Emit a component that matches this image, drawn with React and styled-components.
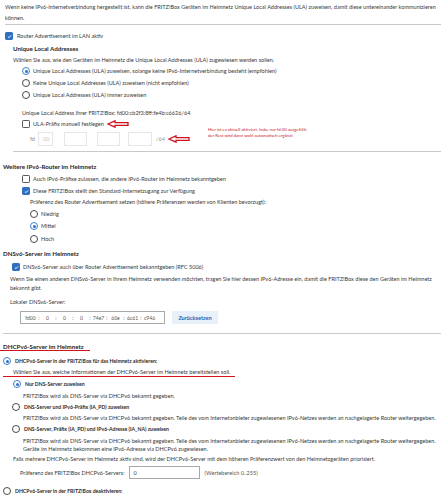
import React from "react";
import styled, { createGlobalStyle } from "styled-components";

const GlobalStyle = createGlobalStyle`
  html, body {
    margin: 0;
    padding: 0;
    background: #ffffff;
  }
  body {
    font-family: "Lato", "Open Sans", sans-serif;
    color: #3a3a3a;
    font-size: 5.55px;
    -webkit-font-smoothing: antialiased;
  }
`;

const Page = styled.div`
  width: 441px;
  height: 499px;
  overflow: hidden;
  display: flex;
  flex-direction: column;
`;

const Text = styled.div`
  padding-left: ${props => props.$indent || 0}px;
  margin-top: ${props => props.$mt || 0}px;
  line-height: ${props => props.$lh || 11}px;
  white-space: nowrap;
`;

const Heading = styled.div`
  padding-left: ${props => props.$indent || 3}px;
  margin-top: ${props => props.$mt || 0}px;
  line-height: 11px;
  font-size: 6.2px;
  font-weight: 700;
  color: #262626;
  white-space: nowrap;
`;

const Rule = styled.div`
  margin-left: ${props => props.$indent || 0}px;
  margin-top: ${props => props.$mt || 0}px;
  height: 1px;
  background: #c9c9c9;
`;

const Option = styled.label`
  display: flex;
  align-items: center;
  padding-left: ${props => props.$indent || 0}px;
  margin-top: ${props => props.$mt || 0}px;
  height: 11px;
  white-space: nowrap;
  font-size: ${props => (props.$bold ? "5.15px" : "inherit")};
  font-weight: ${props => (props.$bold ? 700 : 400)};
  color: ${props => (props.$bold ? "#2a2a2a" : "#3a3a3a")};
`;

const Box = styled.span`
  flex: none;
  width: 6px;
  height: 6px;
  margin-right: ${props => props.$gap || 3}px;
  border-radius: 1.2px;
  border: 0.8px solid ${props => (props.$checked ? "#2f6fc0" : "#5a5a5a")};
  background: ${props => (props.$checked ? "#2f6fc0" : "#ffffff")};
  display: flex;
  align-items: center;
  justify-content: center;
`;

const Round = styled.span`
  flex: none;
  width: 6px;
  height: 6px;
  margin-right: ${props => props.$gap || 3}px;
  border-radius: 50%;
  border: 0.8px solid ${props => (props.$checked ? "#3c7fd0" : "#4a4a4a")};
  background: #ffffff;
  display: flex;
  align-items: center;
  justify-content: center;

  &::after {
    content: "";
    width: 3px;
    height: 3px;
    border-radius: 50%;
    background: ${props => (props.$checked ? "#2f6fc0" : "transparent")};
  }
`;

const Marked = styled.span`
  position: relative;
  display: inline-block;

  &::after {
    content: "";
    position: absolute;
    left: ${props => props.$left}px;
    width: ${props => props.$width}px;
    top: ${props => props.$top}px;
    height: 1.6px;
    background: #d6101a;
  }
`;

const UlaRow = styled.div`
  display: flex;
  align-items: center;
  padding-left: 30px;
  margin-top: 2.5px;
  height: 14px;
`;

const Prefix = styled.span`
  width: 8px;
  color: #8a8a8a;
`;

const Cell = styled.span`
  box-sizing: border-box;
  width: ${props => props.$w}px;
  height: 14px;
  border: 1px solid #e6e6e6;
  color: #c4c4c4;
  display: flex;
  align-items: center;
  padding-left: 4px;
`;

const Sep = styled.span`
  width: ${props => props.$w || 11}px;
  text-align: center;
  color: #9a9a9a;
`;

const Suffix = styled.span`
  margin-left: 4px;
  color: #9a9a9a;
`;

const Note = styled.div`
  align-self: flex-start;
  margin-top: -5px;
  margin-left: 18px;
  color: #c8232c;
  font-size: 4.3px;
  line-height: 6px;
  white-space: nowrap;
`;

const Arrow = () => (
  <svg width="22" height="8" viewBox="0 0 22 8" style={{ flex: "none", marginLeft: 3 }}>
    <path
      d="M1 4 L8 0.8 L8 2.6 L21 2.6 L21 5.4 L8 5.4 L8 7.2 Z"
      fill="#ffffff"
      stroke="#d0101c"
      strokeWidth="1.3"
      strokeLinejoin="miter"
    />
  </svg>
);

const Check = () => (
  <svg width="5" height="5" viewBox="0 0 10 10">
    <path d="M1.8 5.2 L4 7.4 L8.4 2.6" fill="none" stroke="#ffffff" strokeWidth="1.8" />
  </svg>
);

const AddressRow = styled.div`
  display: flex;
  align-items: center;
  padding-left: 20px;
  margin-top: ${props => props.$mt || 0}px;
  height: 13px;
`;

const AddressField = styled.div`
  box-sizing: border-box;
  width: 145px;
  height: 13px;
  border: 1px solid #a8a8a8;
  display: flex;
  align-items: center;
  padding-left: 3px;
  color: #555555;
  font-size: 5px;
`;

const Segment = styled.span`
  width: 13px;
  text-align: center;
`;

const Colon = styled.span`
  width: 4px;
  text-align: center;
`;

const ResetButton = styled.span`
  margin-left: 7px;
  width: 46px;
  height: 13px;
  background: #e8f0f9;
  color: #1f5fae;
  font-weight: 700;
  display: flex;
  align-items: center;
  justify-content: center;
`;

const PrefField = styled.span`
  box-sizing: border-box;
  width: 71px;
  height: 13px;
  margin-left: 4px;
  border: 1px solid #a8a8a8;
  display: flex;
  align-items: center;
  padding-left: 4px;
  color: #444444;
`;

const Range = styled.span`
  margin-left: 5px;
  color: #555555;
`;

const dnsSegments = ["fd00", "0", "0", "0", "74e7", "60e", "6c61", "c946"];

export default function App() {
  return (
    <Page>
      <GlobalStyle />
      <Text $indent={5} $mt={2}>
        Wenn keine IPv6-Internetverbindung hergestellt ist, kann die FRITZ!Box Geräten im Heimnetz Unique Local Addresses (ULA) zuweisen, damit diese untereinander kommunizieren
        <br />
        können.
      </Text>
      <Rule $indent={5} $mt={0} />

      <Option $indent={5} $mt={5.5}>
        <Box $checked $gap={4}>
          <Check />
        </Box>
        Router Advertisement im LAN aktiv
      </Option>
      <Heading $indent={13} $mt={1}>
        Unique Local Addresses
      </Heading>
      <Text $indent={13} $mt={1}>
        Wählen Sie aus, wie den Geräten im Heimnetz die Unique Local Addresses (ULA) zugewiesen werden sollen.
      </Text>
      <Option $indent={22} $mt={0}>
        <Round $checked />
        Unique Local Addresses (ULA) zuweisen, solange keine IPv6-Internetverbindung besteht (empfohlen)
      </Option>
      <Option $indent={22} $mt={1}>
        <Round />
        Keine Unique Local Addresses (ULA) zuweisen (nicht empfohlen)
      </Option>
      <Option $indent={22} $mt={1}>
        <Round />
        Unique Local Addresses (ULA) immer zuweisen
      </Option>
      <Text $indent={22} $mt={7}>
        Unique Local Address Ihrer FRITZ!Box: fd00:cb2f3:8ff:fe4b:c6626/64
      </Text>
      <Option $indent={22} $mt={0}>
        <Box />
        ULA-Präfix manuell festlegen
        <Arrow />
      </Option>
      <UlaRow>
        <Prefix>fd</Prefix>
        <Cell $w={15}>00</Cell>
        <Sep />
        <Cell $w={23} />
        <Sep $w={10} />
        <Cell $w={23} />
        <Sep $w={8} />
        <Cell $w={24} />
        <Suffix>/64</Suffix>
        <Arrow />
        <Note>
          Hier ist es aktuell aktiviert. habe nur fd 00 ausgefüllt.
          <br />
          der Rest wird dann wohl automatisch ergänzt
        </Note>
      </UlaRow>
      <Rule $indent={13} $mt={5} />

      <Heading $mt={8.5}>Weitere IPv6-Router im Heimnetz</Heading>
      <Option $indent={22} $mt={2}>
        <Box />
        Auch IPv6-Präfixe zulassen, die andere IPv6-Router im Heimnetz bekanntgeben
      </Option>
      <Option $indent={22} $mt={1}>
        <Box $checked>
          <Check />
        </Box>
        Diese FRITZ!Box stellt den Standard-Internetzugang zur Verfügung
      </Option>
      <Text $indent={30} $mt={0}>
        Präferenz des Router Advertisement setzen (höhere Präferenzen werden von Klienten bevorzugt):
      </Text>
      <Option $indent={30} $mt={1}>
        <Round />
        Niedrig
      </Option>
      <Option $indent={30} $mt={1}>
        <Round $checked />
        Mittel
      </Option>
      <Option $indent={30} $mt={2}>
        <Round />
        Hoch
      </Option>

      <Heading $mt={3}>DNSv6-Server im Heimnetz</Heading>
      <Option $indent={12} $mt={3}>
        <Box $checked>
          <Check />
        </Box>
        DNSv6-Server auch über Router Advertisement bekanntgeben (RFC 5006)
      </Option>
      <Text $indent={10} $mt={2} $lh={9}>
        Wenn Sie einen anderen DNSv6-Server in Ihrem Heimnetz verwenden möchten, tragen Sie hier dessen IPv6-Adresse ein, damit die FRITZ!Box diese den Geräten im Heimnetz
        <br />
        bekannt gibt.
      </Text>
      <Text $indent={10} $mt={4}>
        Lokaler DNSv6-Server:
      </Text>
      <AddressRow $mt={3.5}>
        <AddressField>
          {dnsSegments.map((seg, i) => (
            <React.Fragment key={i}>
              {i > 0 && <Colon>:</Colon>}
              <Segment>{seg}</Segment>
            </React.Fragment>
          ))}
        </AddressField>
        <ResetButton>Zurücksetzen</ResetButton>
      </AddressRow>
      <Rule $indent={3} $mt={9} />

      <Heading $mt={6.5}>
        <Marked $left={-3} $width={90} $top={9}>
          DHCPv6-Server im Heimnetz
        </Marked>
      </Heading>
      <Option $indent={3} $mt={4} $bold>
        <Round $checked $gap={4} />
        DHCPv6-Server in der FRITZ!Box für das Heimnetz aktivieren:
      </Option>
      <Text $indent={13} $mt={0}>
        <Marked $left={-10} $width={232} $top={9}>
          Wählen Sie aus, welche Informationen der DHCPv6-Server im Heimnetz bereitstellen soll.
        </Marked>
      </Text>
      <Option $indent={13} $mt={1} $bold>
        <Round $checked $gap={4} />
        Nur DNS-Server zuweisen
      </Option>
      <Text $indent={23} $mt={1}>
        FRITZ!Box wird als DNS-Server via DHCPv6 bekannt gegeben.
      </Text>
      <Option $indent={12} $mt={0} $bold>
        <Round $gap={4} />
        DNS-Server und IPv6-Präfix (IA_PD) zuweisen
      </Option>
      <Text $indent={23} $mt={0}>
        FRITZ!Box wird als DNS-Server via DHCPv6 bekannt gegeben. Teile des vom Internetanbieter zugewiesenen IPv6-Netzes werden an nachgelagerte Router weitergegeben.
      </Text>
      <Option $indent={12} $mt={0} $bold>
        <Round $gap={4} />
        DNS-Server, Präfix (IA_PD) und IPv6-Adresse (IA_NA) zuweisen
      </Option>
      <Text $indent={23} $mt={2.5} $lh={8}>
        FRITZ!Box wird als DNS-Server via DHCPv6 bekannt gegeben. Teile des vom Internetanbieter zugewiesenen IPv6-Netzes werden an nachgelagerte Router weitergegeben.
        <br />
        Geräte im Heimnetz bekommen eine IPv6-Adresse via DHCPv6 zugewiesen.
      </Text>
      <Text $indent={13} $mt={0.5}>
        Falls mehrere DHCPv6-Server im Heimnetz aktiv sind, wird der DHCPv6-Server mit dem höheren Präferenzwert von den Heimnetzgeräten priorisiert.
      </Text>
      <AddressRow $mt={1.5}>
        Präferenz des FRITZ!Box DHCPv6-Servers:
        <PrefField>0</PrefField>
        <Range>(Wertebereich 0..255)</Range>
      </AddressRow>
      <Option $indent={3} $mt={6.5} $bold>
        <Round $gap={4} />
        DHCPv6-Server in der FRITZ!Box deaktivieren:
      </Option>
    </Page>
  );
}
